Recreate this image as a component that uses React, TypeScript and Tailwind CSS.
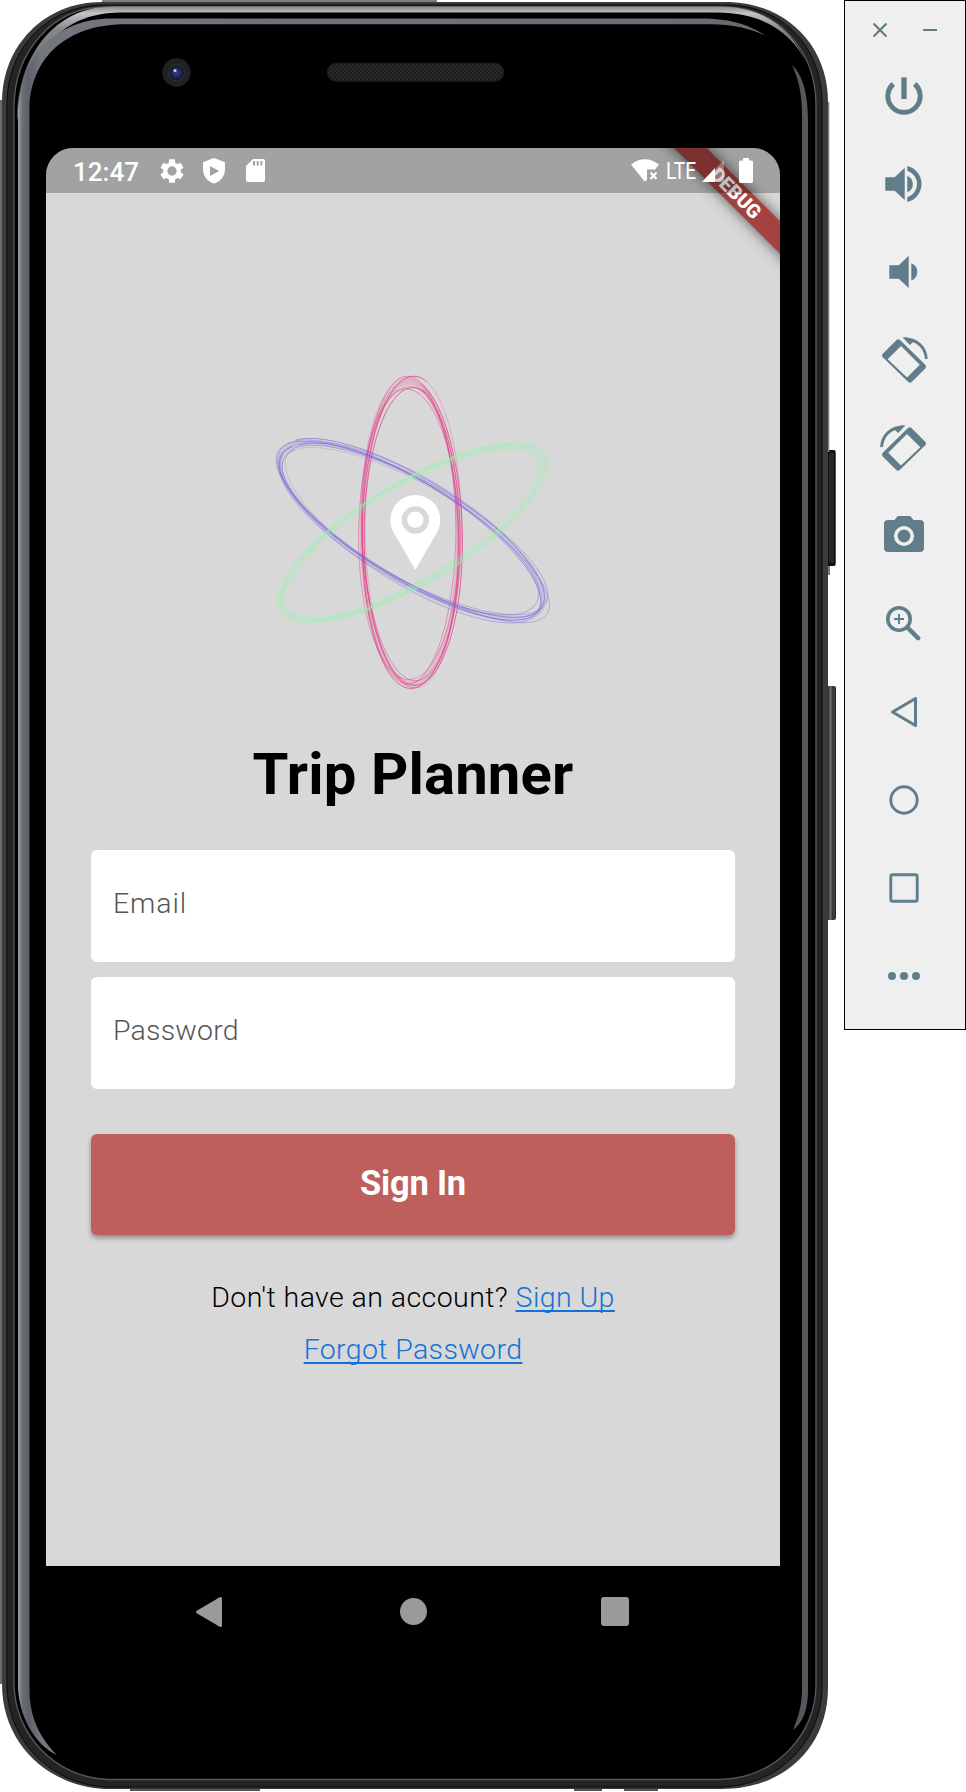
import React from "react";

function PhoneFrame() {
  return (
    <svg aria-hidden="true" className="absolute inset-0" width="844" height="1792" viewBox="0 0 844 1792">
      <defs>
        <linearGradient id="rim" x1="0" y1="0" x2="1" y2="0">
          <stop offset="0" stopColor="#9da0a4" />
          <stop offset="0.006" stopColor="#6a6e74" />
          <stop offset="0.014" stopColor="#5d6169" />
          <stop offset="0.03" stopColor="#74767e" />
          <stop offset="1" stopColor="#6a6a72" />
        </linearGradient>
        <linearGradient id="topBand" x1="0" y1="0" x2="0" y2="1">
          <stop offset="0" stopColor="#8a8a8e" />
          <stop offset="0.06" stopColor="#c2c2c8" />
          <stop offset="0.2" stopColor="#86868c" />
          <stop offset="1" stopColor="#4a4a4e" />
        </linearGradient>
        <linearGradient id="key" x1="0" y1="0" x2="1" y2="0">
          <stop offset="0" stopColor="#0c0c0c" />
          <stop offset="0.4" stopColor="#707070" />
          <stop offset="0.65" stopColor="#2c2c2c" />
          <stop offset="0.8" stopColor="#484848" />
          <stop offset="1" stopColor="#161616" />
        </linearGradient>
        <radialGradient id="lens">
          <stop offset="0" stopColor="#33457c" />
          <stop offset="0.6" stopColor="#1b2550" />
          <stop offset="1" stopColor="#10141f" />
        </radialGradient>
        <pattern id="mesh" width="4" height="4" patternUnits="userSpaceOnUse">
          <rect width="4" height="4" fill="#1c1d1d" />
          <rect width="1.5" height="1.5" fill="#343636" />
          <rect x="2" y="2" width="1.5" height="1.5" fill="#343636" />
        </pattern>
      </defs>
      <rect x="826" y="450" width="9.7" height="116" rx="2" fill="#111" />
      <rect x="829" y="453" width="5" height="110" rx="1.5" fill="#272727" />
      <rect x="828" y="566" width="2" height="9" fill="#777" />
      <rect x="827" y="686" width="9" height="234" rx="2" fill="url(#key)" />
      <rect x="102" y="0" width="335" height="4" fill="#7d807e" />
      <rect x="0" y="100" width="3" height="1584" fill="#6c6a6a" />
      <rect x="826" y="102" width="3.3" height="350" fill="#868686" />
      <rect x="130" y="1789" width="130" height="2" fill="#555" />
      <rect x="574" y="1789" width="28" height="2" fill="#555" />
      <rect x="624" y="1789" width="34" height="2" fill="#555" />
      <path d="M102 2H730C786 4 828 45 828 102V1688C828 1745 786 1789 722 1789H104C45 1785 2 1742 2 1684V102C2 45 45 2 102 2Z" fill="#3c3b3b" />
      <path d="M104 5H728C783 6 822 47 822 104V1686C822 1740 780 1786 720 1787H106C50 1784 7 1740 7 1684V104C7 48 48 5 104 5Z" fill="#242424" stroke="#0a0a0a" strokeWidth="1" />
      <path d="M106 7H726C778 8 816 50 816 106V1685C816 1734 776 1779 718 1779.5H108C55 1778 14 1734 14 1683V108C14 52 52 7 106 7Z" fill="#000" stroke="#555658" strokeWidth="1.4" />
      <path d="M17 122C17 55 55 7 112 6.5H720C767 7 793 32 806 62C792 34 765 13 718 12.5H120C66 13 30 46 17 122Z" fill="url(#topBand)" />
      <path d="M768 37C750 26 735 18.5 700 18.5H112C55 18.5 18 58 18 118V1684C18 1716 35 1745 57 1755C42 1740 29.500 1720 29.500 1690V110C29.500 60 65 24.300 125 24.300H710C735 24.300 755 30 768 37Z" fill="url(#rim)" />
      <path d="M792 65C803 75 808 95 808 120V1690C808 1710 803 1722 793 1730C798 1718 802 1705 802 1690V115C802 95 799 80 792 65Z" fill="#56565c" />
      <circle cx="176.500" cy="72.500" r="14.200" fill="#202124" />
      <circle cx="176.500" cy="72.800" r="8" fill="url(#lens)" stroke="#3a3b3d" strokeWidth="0.8" />
      <circle cx="175" cy="70.500" r="1.600" fill="#c4cce6" />
      <rect x="327.500" y="63.500" width="176" height="17.500" rx="8.750" fill="url(#mesh)" stroke="#1c1c1c" strokeWidth="1.500" />
    </svg>
  );
}

function StatusBar() {
  return (
    <header className="relative z-10 flex h-[45px] w-full shrink-0 items-center bg-black/25 pl-[27px] pr-[27px] text-white">
      <span className="mt-[2px] w-[85px] text-[26px] font-medium leading-none">12:47</span>
      <svg width="28" height="28" viewBox="0 0 24 24" fill="currentColor">
        <path d="M19.430 12.980c.040-.320.070-.640.070-.980s-.030-.660-.070-.980l2.110-1.650c.190-.150.240-.420.120-.640l-2-3.460c-.120-.220-.390-.300-.610-.220l-2.490 1c-.520-.400-1.080-.730-1.690-.980l-.380-2.650C14.460 2.180 14.250 2 14 2h-4c-.250 0-.460.180-.490.420l-.380 2.650c-.610.250-1.170.590-1.690.980l-2.490-1c-.230-.090-.490 0-.610.220l-2 3.460c-.130.220-.070.490.120.640l2.110 1.650c-.040.320-.070.650-.070.980s.030.660.070.980l-2.110 1.650c-.190.150-.240.420-.120.640l2 3.460c.120.220.390.300.610.220l2.490-1c.520.400 1.080.730 1.690.980l.380 2.650c.030.240.240.420.490.420h4c.250 0 .460-.180.490-.420l.380-2.650c.610-.250 1.170-.590 1.690-.980l2.490 1c.230.090.490 0 .610-.220l2-3.460c.120-.220.070-.490-.120-.640l-2.110-1.650zM12 16a4 4 0 1 1 0-8 4 4 0 0 1 0 8z" />
      </svg>
      <svg className="ml-[16px]" width="24" height="27" viewBox="0 0 24 27" fill="currentColor" fillRule="evenodd">
        <path d="M12 1L22.500 5Q23 5 23 6V12C23 20 18 24.500 12 26.500C6 24.500 1 20 1 12V6Q1 5 1.500 5ZM8 9V19L17 14Z" />
      </svg>
      <svg className="ml-[19px]" width="21" height="25" viewBox="0 0 21 25" fill="currentColor" fillRule="evenodd">
        <path d="M8 1H18Q20 1 20 3V22Q20 24 18 24H3Q1 24 1 22V8ZM8 3V7.500H10V3ZM11.700 3V7.500H13.700V3ZM15.400 3V7.500H17.400V3Z" />
      </svg>
      <div className="ml-auto flex items-center">
        <svg width="30" height="25" viewBox="0 0 30 25" fill="currentColor">
          <path d="M1 6.500Q14.500 -4 29 6.500L25 11.500H17V21.500Q15 25 13 21.500Z" />
          <path d="M20.500 14.500L26.500 21M26.500 14.500L20.500 21" stroke="currentColor" strokeWidth="2.300" />
        </svg>
        <span className="ml-[6px] w-[32px] pt-[3px]">
          <span className="inline-block origin-left scale-x-[0.8] text-[24px] leading-[24px]">LTE</span>
        </span>
        <svg className="ml-[3px]" width="24" height="24" viewBox="0 0 24 24" fill="currentColor">
          <path opacity="0.3" d="M14 10L23 1V23H14Z" />
          <path d="M1 23L14 9V23Z" />
        </svg>
        <svg className="ml-[14px]" width="14" height="25" viewBox="0 0 14 25" fill="currentColor">
          <path d="M4 0H10V2.500H12.500Q14 2.500 14 4V23Q14 25 12.500 25H1.500Q0 25 0 23V4Q0 2.500 1.500 2.500H4Z" />
        </svg>
      </div>
    </header>
  );
}

function DebugRibbon() {
  return (
    <div className="absolute right-0 top-0 h-[150px] w-[150px] overflow-hidden">
      <div className="absolute left-[6px] top-[34px] flex h-[22.500px] w-[240px] -translate-x-[20px] rotate-45 items-center justify-center bg-[#a64141] text-[19.500px] font-black leading-none text-white shadow-[0_0_14px_rgba(0,0,0,0.600)]">
        DEBUG
      </div>
    </div>
  );
}

type Orbit = { cx: number; cy: number; rx: number; ry: number; tilt: number; phase: number; color: string; opacity: number };

const orbits: Orbit[] = [
  { cx: 451, cy: 519, rx: 145, ry: 452, tilt: -0.7, phase: 0, color: "#e2307f", opacity: 0.68 },
  { cx: 455, cy: 512, rx: 148, ry: 454, tilt: -59.3, phase: 2.1, color: "#7865d8", opacity: 0.65 },
  { cx: 458, cy: 519, rx: 147, ry: 448, tilt: 59.5, phase: 4.4, color: "#98f2ae", opacity: 0.55 },
];

// One turn of a hand-drawn orbit; size, centre and tilt drift slowly from turn to turn.
function orbitTurn(o: Orbit, turn: number): string {
  const points: string[] = [];
  for (let i = 0; i <= 72; i++) {
    const a = (i / 72) * Math.PI * 2;
    const t = turn * Math.PI * 2 + a;
    const rx = o.rx + 5 * Math.sin(t * 0.37 + o.phase);
    const ry = o.ry + 18 * Math.sin(t * 0.23 + o.phase * 1.3);
    const tilt = ((o.tilt + 1.2 * Math.sin(t * 0.31 + o.phase)) * Math.PI) / 180;
    const x = rx * Math.cos(a - 1.3) + 7 * Math.sin(t * 0.19 + o.phase);
    const y = ry * Math.sin(a - 1.3) + 5 * Math.cos(t * 0.29);
    points.push(`${(o.cx + x * Math.cos(tilt) - y * Math.sin(tilt)).toFixed(1)} ${(o.cy + x * Math.sin(tilt) + y * Math.cos(tilt)).toFixed(1)}`);
  }
  return "M" + points.join("L");
}

function Logo() {
  return (
    <svg className="ml-[4px] mt-[167px] shrink-0" width="310" height="340" viewBox="0 0 930 1020">
      {orbits.map((o) => (
        <g key={o.color} fill="none" stroke={o.color} strokeLinejoin="round">
          <ellipse cx={o.cx} cy={o.cy} rx={o.rx} ry={o.ry} strokeWidth="15" opacity="0.18" transform={`rotate(${o.tilt} ${o.cx} ${o.cy})`} />
          {[0, 1, 2, 3, 4, 5, 6].map((turn) => (
            <path key={turn} d={orbitTurn(o, turn)} strokeWidth={turn % 3 === 0 ? 3 : 2} opacity={turn % 2 === 0 ? o.opacity : o.opacity * 0.6} />
          ))}
        </g>
      ))}
      <path fill="#fff" fillRule="evenodd" d="M391 480A75 75 0 0 1 541 480C541 500 534 512 526 526L466 630L406 526C398 512 391 500 391 480ZM466 439a41 41 0 1 0 0 82a41 41 0 0 0 0 -82Z" />
      <circle cx="466" cy="479" r="24.500" fill="#fff" />
    </svg>
  );
}

const link = "text-[#1272d6] underline decoration-[1.5px] underline-offset-[3px] [text-decoration-skip-ink:none]";

function Screen() {
  return (
    <main className="relative flex h-[1418px] w-[734px] flex-col items-center overflow-hidden rounded-t-[27px] bg-[#d8d8d8]">
      <DebugRibbon />
      <StatusBar />
      <Logo />
      <h1 className="mt-[44px] text-[58px] font-bold leading-[60px] tracking-[0.150px] text-black">Trip Planner</h1>
      <div className="mt-[46px] flex w-[644px] flex-col gap-[15px] text-[28.500px] font-light leading-[36px] text-[#555]">
        <div className="h-[112px] rounded-[6px] bg-white px-[22px] pt-[36px] tracking-[0.900px]">Email</div>
        <div className="h-[112px] rounded-[6px] bg-white px-[22px] pt-[36px] tracking-[0.200px]">Password</div>
      </div>
      <button className="mt-[44.500px] h-[101px] w-[644px] shrink-0 rounded-[6px] bg-[#be5f5c] text-[34.500px] font-bold tracking-[-0.200px] text-white shadow-[0_3px_5px_rgba(0,0,0,0.350)]">
        Sign In
      </button>
      <p className="mt-[45.500px] text-[28.500px] font-light leading-[36px] tracking-[0.420px] text-black">
        Don't have an account? <a className={link}>Sign Up</a>
      </p>
      <p className="mt-[16px] text-[28.500px] font-light leading-[36px] tracking-[0.370px]">
        <a className={link}>Forgot Password</a>
      </p>
    </main>
  );
}

function NavBar() {
  return (
    <nav className="flex h-[91px] w-[734px] items-center justify-between pl-[149px] pr-[151px] text-[#9a9a9a]">
      <svg width="28" height="32" viewBox="0 0 28 32" fill="currentColor" stroke="currentColor" strokeWidth="3" strokeLinejoin="round">
        <path d="M25.500 2.500V29.500L2.500 16Z" />
      </svg>
      <div className="ml-[3px] h-[27px] w-[27px] rounded-full bg-[#9a9a9a]" />
      <div className="h-[28.500px] w-[28.500px] rounded-[3px] bg-[#9a9a9a]" />
    </nav>
  );
}

const phoneRotate = (
  <>
    <path fillRule="evenodd" d="M16.300 4.300Q18.300 2.300 20.300 4.300L45 28.500Q47 30.700 45 32.700L32 45.800Q30 47.800 28 45.800L3 21.500Q1 19.500 3 17.500ZM21 10L7.700 23.300L27 41.500L39.800 28.700Z" />
    <path d="M22.500 1.300C36.500 0.800 47.500 10 47.700 23H45C44.300 14.500 39.500 8.500 33 6.200L29.800 9Z" />
  </>
);

const toolIcons: { name: string; art: React.ReactNode }[] = [
  {
    name: "Power",
    art: (
      <g fill="none" stroke="currentColor">
        <path strokeWidth="5" d="M13.300 12A16.200 16.200 0 1 0 34.700 12" />
        <path strokeWidth="5.300" d="M24 5.300V27" />
      </g>
    ),
  },
  {
    name: "Volume up",
    art: <path d="M5.300 17.300H14.700L24.700 7.700V40L14.700 30.700H5.300ZM27.300 15.700A9 9 0 0 1 27.300 32.300ZM27.300 6A18.500 18.500 0 0 1 27.300 42V37.200A13.800 13.800 0 0 0 27.300 10.800Z" />,
  },
  {
    name: "Volume down",
    art: <path d="M9.300 17.300H18.700L28.700 7.700V40L18.700 30.700H9.300ZM31.300 15.300A9.200 9.200 0 0 1 31.300 32.500Z" />,
  },
  { name: "Rotate left", art: phoneRotate },
  { name: "Rotate right", art: <g transform="matrix(-1 0 0 1 48 0)">{phoneRotate}</g> },
  {
    name: "Screenshot",
    art: (
      <>
        <path fillRule="evenodd" d="M18 4L14.300 8H8Q4 8 4 12V36Q4 40 8 40H40Q44 40 44 36V12Q44 8 40 8H33.700L30 4ZM24 14a10 10 0 1 0 0 20a10 10 0 0 0 0 -20Z" />
        <circle cx="24" cy="24" r="6.400" />
      </>
    ),
  },
  {
    name: "Zoom",
    art: (
      <g fill="none" stroke="currentColor">
        <circle cx="19" cy="19" r="11.200" strokeWidth="3.600" />
        <path strokeWidth="1.900" d="M14 19H24M19 14V24" />
        <path strokeWidth="4.500" d="M27.500 27.500L39 39" />
        <path strokeWidth="3.500" strokeLinecap="round" d="M30 30L38.500 38.500" />
      </g>
    ),
  },
  { name: "Back", art: <path fill="none" stroke="currentColor" strokeWidth="3" strokeLinejoin="round" d="M35.500 10.500V37.500L12.500 24Z" /> },
  { name: "Home", art: <circle cx="24" cy="24" r="13.200" fill="none" stroke="currentColor" strokeWidth="2.900" /> },
  { name: "Overview", art: <rect x="10.800" y="10.800" width="26.400" height="26.400" rx="1.500" fill="none" stroke="currentColor" strokeWidth="2.900" /> },
  {
    name: "More",
    art: (
      <>
        <circle cx="12" cy="24" r="4" />
        <circle cx="24" cy="24" r="4" />
        <circle cx="36" cy="24" r="4" />
      </>
    ),
  },
];

function Toolbar() {
  return (
    <aside className="flex h-[1030px] w-[122px] shrink-0 flex-col items-center border border-black bg-[#efefef] text-[#617d8a]">
      <div className="flex h-[71px] w-full items-start justify-between pl-[28px] pr-[28px] pt-[22px]">
        <svg width="14" height="14" viewBox="0 0 14 14" fill="none" stroke="currentColor" strokeWidth="2.200">
          <path d="M0.500 0.500L13.500 13.500M13.500 0.500L0.500 13.500" />
        </svg>
        <div className="mt-[6px] h-[2px] w-[14px] bg-[#617d8a]" />
      </div>
      <div className="mr-[2px] flex flex-col gap-10">
        {toolIcons.map((icon) => (
          <button key={icon.name} aria-label={icon.name} className="h-12 w-12">
            <svg width="48" height="48" viewBox="0 0 48 48" fill="currentColor" className="block">
              {icon.art}
            </svg>
          </button>
        ))}
      </div>
    </aside>
  );
}

export default function App() {
  return (
    <div className="flex h-[1792px] w-[966px] items-start overflow-hidden bg-white font-[Roboto,sans-serif]">
      <div className="relative h-[1792px] w-[844px] shrink-0">
        <PhoneFrame />
        <div className="relative pl-[46px] pt-[148px]">
          <Screen />
          <NavBar />
        </div>
      </div>
      <Toolbar />
    </div>
  );
}
